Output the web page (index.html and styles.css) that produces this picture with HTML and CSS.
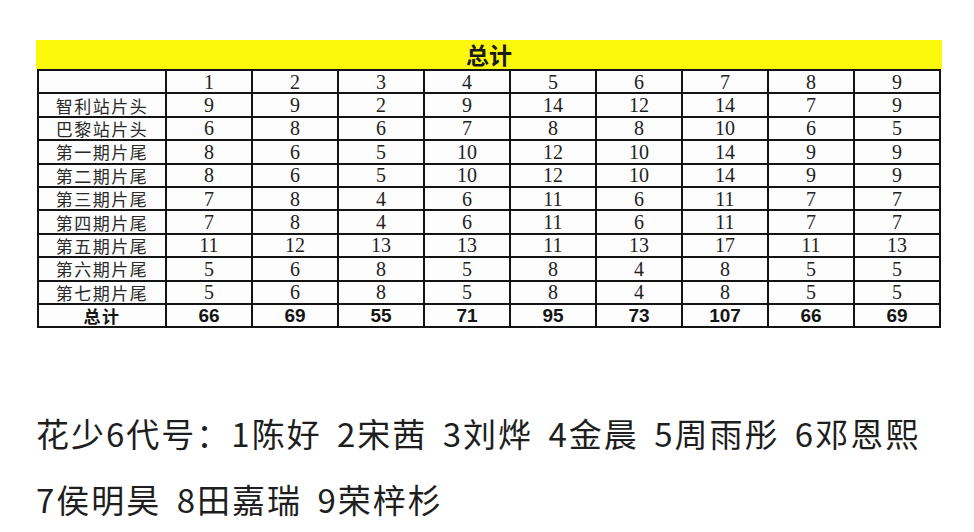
FILE: index.html
```html
<!DOCTYPE html>
<html lang="zh">
<head>
<meta charset="utf-8">
<link rel="stylesheet" href="styles.css">
</head>
<body>
<div class="page">
  <div class="sheet">
    <div class="title">总计</div>
    <table class="grid">
      <colgroup>
        <col class="c-label">
        <col><col><col><col><col><col><col><col><col>
      </colgroup>
      <tr><td></td><td>1</td><td>2</td><td>3</td><td>4</td><td>5</td><td>6</td><td>7</td><td>8</td><td>9</td></tr>
      <tr><td class="lbl">智利站片头</td><td>9</td><td>9</td><td>2</td><td>9</td><td>14</td><td>12</td><td>14</td><td>7</td><td>9</td></tr>
      <tr><td class="lbl">巴黎站片头</td><td>6</td><td>8</td><td>6</td><td>7</td><td>8</td><td>8</td><td>10</td><td>6</td><td>5</td></tr>
      <tr><td class="lbl">第一期片尾</td><td>8</td><td>6</td><td>5</td><td>10</td><td>12</td><td>10</td><td>14</td><td>9</td><td>9</td></tr>
      <tr><td class="lbl">第二期片尾</td><td>8</td><td>6</td><td>5</td><td>10</td><td>12</td><td>10</td><td>14</td><td>9</td><td>9</td></tr>
      <tr><td class="lbl">第三期片尾</td><td>7</td><td>8</td><td>4</td><td>6</td><td>11</td><td>6</td><td>11</td><td>7</td><td>7</td></tr>
      <tr><td class="lbl">第四期片尾</td><td>7</td><td>8</td><td>4</td><td>6</td><td>11</td><td>6</td><td>11</td><td>7</td><td>7</td></tr>
      <tr><td class="lbl">第五期片尾</td><td>11</td><td>12</td><td>13</td><td>13</td><td>11</td><td>13</td><td>17</td><td>11</td><td>13</td></tr>
      <tr><td class="lbl">第六期片尾</td><td>5</td><td>6</td><td>8</td><td>5</td><td>8</td><td>4</td><td>8</td><td>5</td><td>5</td></tr>
      <tr><td class="lbl">第七期片尾</td><td>5</td><td>6</td><td>8</td><td>5</td><td>8</td><td>4</td><td>8</td><td>5</td><td>5</td></tr>
      <tr class="total"><td class="lbl">总计</td><td>66</td><td>69</td><td>55</td><td>71</td><td>95</td><td>73</td><td>107</td><td>66</td><td>69</td></tr>
    </table>
  </div>
  <div class="caption">
    <p>花少6代号：1陈好 2宋茜 3刘烨 4金晨 5周雨彤 6邓恩熙</p>
    <p>7侯明昊 8田嘉瑞 9荣梓杉</p>
  </div>
</div>
</body>
</html>
```
FILE: styles.css
```css
html, body {
  margin: 0;
  padding: 0;
  background: #ffffff;
}
.page {
  padding: 40px 0 0 36px;
  width: 938px;
}
.sheet {
  width: 906px;
}
.title {
  height: 29px;
  background: #fcf80c;
  text-align: center;
  font-family: "Noto Sans CJK SC", sans-serif;
  font-weight: 700;
  font-size: 23px;
  line-height: 29px;
  color: #1a1a1a;
}
.grid {
  margin-left: 1px;
  width: 904px;
  border-collapse: collapse;
  table-layout: fixed;
  border: 2px solid #141414;
}
.grid tr {
  height: 23.4px;
}
.c-label {
  width: 128px;
}
.grid td {
  border: 2px solid #141414;
  padding: 0;
  text-align: center;
  vertical-align: middle;
  font-family: "Liberation Serif", "Noto Sans CJK SC", serif;
  font-size: 20px;
  line-height: 18px;
  color: #222;
  background: #fdfdfd;
}
.grid td.lbl {
  font-family: "Noto Sans CJK SC", sans-serif;
  font-size: 17px;
  line-height: 17px;
  color: #2a2a2a;
  letter-spacing: 1.5px;
}
.grid tr.total td {
  font-family: "Liberation Sans", "Noto Sans CJK SC", sans-serif;
  font-weight: 700;
  font-size: 19px;
  color: #151515;
}
.grid tr.total td.lbl {
  font-family: "Noto Sans CJK SC", sans-serif;
  font-size: 17px;
  line-height: 17px;
}
.caption {
  margin-top: 72px;
  font-family: "Noto Sans CJK SC", sans-serif;
  font-size: 33px;
  line-height: 66px;
  letter-spacing: 2px;
  word-spacing: 6px;
  color: #1e1e1e;
}
.caption p {
  margin: 0;
  white-space: nowrap;
}
```
